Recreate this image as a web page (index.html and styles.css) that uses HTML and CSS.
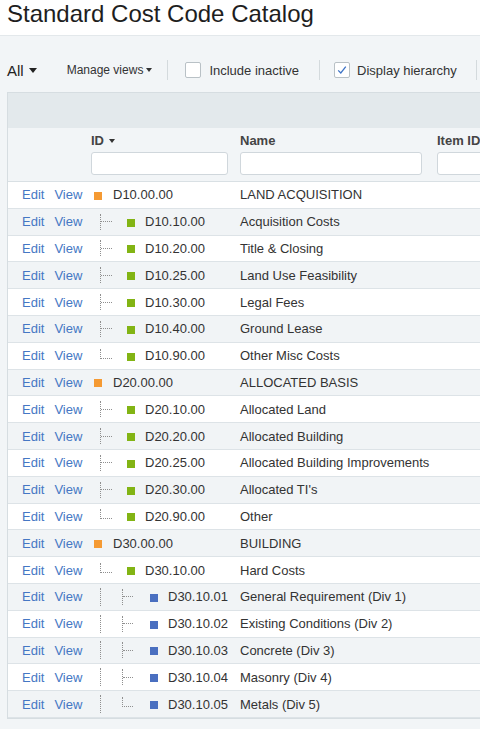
FILE: index.html
```html
<!DOCTYPE html>
<html>
<head>
<meta charset="utf-8">
<link rel="stylesheet" href="styles.css">
</head>
<body>
<div class="title">Standard Cost Code Catalog</div>
<div class="page">
  <div class="toolbar">
    <span class="all">All</span><span class="caret big"></span>
    <span class="manage">Manage views</span><span class="caret small"></span>
    <span class="sep s1"></span>
    <span class="cb cb1"></span><span class="cblabel l1">Include inactive</span>
    <span class="sep s2"></span>
    <span class="cb cb2 checked"><svg width="14" height="14" viewBox="0 0 14 14"><path d="M3.2 7.4 L5.8 10 L10.8 3.6" fill="none" stroke="#3f74c6" stroke-width="1.3"/></svg></span><span class="cblabel l2">Display hierarchy</span>
    <span class="sep s3"></span>
  </div>
  <div class="grid">
    <div class="band"></div>
    <div class="head">
      <div class="c c-act"></div>
      <div class="c c-id"><div class="hlabel">ID <span class="caret tiny"></span></div><div class="inp"></div></div>
      <div class="c c-name"><div class="hlabel">Name</div><div class="inp w-name"></div></div>
      <div class="c c-item"><div class="hlabel">Item ID</div><div class="inp w-item"></div></div>
    </div>
    <div class="rows">
      <div class="row"><div class="c c-act"><a>Edit</a><a>View</a></div><div class="c c-id"><span class="sq o l0"></span><span class="code">D10.00.00</span></div><div class="c c-name">LAND ACQUISITION</div><div class="c c-item"></div></div>
      <div class="row"><div class="c c-act"><a>Edit</a><a>View</a></div><div class="c c-id"><span class="tee"><i></i></span><span class="sq g"></span><span class="code">D10.10.00</span></div><div class="c c-name">Acquisition Costs</div><div class="c c-item"></div></div>
      <div class="row"><div class="c c-act"><a>Edit</a><a>View</a></div><div class="c c-id"><span class="tee"><i></i></span><span class="sq g"></span><span class="code">D10.20.00</span></div><div class="c c-name">Title &amp; Closing</div><div class="c c-item"></div></div>
      <div class="row"><div class="c c-act"><a>Edit</a><a>View</a></div><div class="c c-id"><span class="tee"><i></i></span><span class="sq g"></span><span class="code">D10.25.00</span></div><div class="c c-name">Land Use Feasibility</div><div class="c c-item"></div></div>
      <div class="row"><div class="c c-act"><a>Edit</a><a>View</a></div><div class="c c-id"><span class="tee"><i></i></span><span class="sq g"></span><span class="code">D10.30.00</span></div><div class="c c-name">Legal Fees</div><div class="c c-item"></div></div>
      <div class="row"><div class="c c-act"><a>Edit</a><a>View</a></div><div class="c c-id"><span class="tee"><i></i></span><span class="sq g"></span><span class="code">D10.40.00</span></div><div class="c c-name">Ground Lease</div><div class="c c-item"></div></div>
      <div class="row"><div class="c c-act"><a>Edit</a><a>View</a></div><div class="c c-id"><span class="elbow"></span><span class="sq g"></span><span class="code">D10.90.00</span></div><div class="c c-name">Other Misc Costs</div><div class="c c-item"></div></div>
      <div class="row"><div class="c c-act"><a>Edit</a><a>View</a></div><div class="c c-id"><span class="sq o l0"></span><span class="code">D20.00.00</span></div><div class="c c-name">ALLOCATED BASIS</div><div class="c c-item"></div></div>
      <div class="row"><div class="c c-act"><a>Edit</a><a>View</a></div><div class="c c-id"><span class="tee"><i></i></span><span class="sq g"></span><span class="code">D20.10.00</span></div><div class="c c-name">Allocated Land</div><div class="c c-item"></div></div>
      <div class="row"><div class="c c-act"><a>Edit</a><a>View</a></div><div class="c c-id"><span class="tee"><i></i></span><span class="sq g"></span><span class="code">D20.20.00</span></div><div class="c c-name">Allocated Building</div><div class="c c-item"></div></div>
      <div class="row"><div class="c c-act"><a>Edit</a><a>View</a></div><div class="c c-id"><span class="tee"><i></i></span><span class="sq g"></span><span class="code">D20.25.00</span></div><div class="c c-name">Allocated Building Improvements</div><div class="c c-item"></div></div>
      <div class="row"><div class="c c-act"><a>Edit</a><a>View</a></div><div class="c c-id"><span class="tee"><i></i></span><span class="sq g"></span><span class="code">D20.30.00</span></div><div class="c c-name">Allocated TI's</div><div class="c c-item"></div></div>
      <div class="row"><div class="c c-act"><a>Edit</a><a>View</a></div><div class="c c-id"><span class="elbow"></span><span class="sq g"></span><span class="code">D20.90.00</span></div><div class="c c-name">Other</div><div class="c c-item"></div></div>
      <div class="row"><div class="c c-act"><a>Edit</a><a>View</a></div><div class="c c-id"><span class="sq o l0"></span><span class="code">D30.00.00</span></div><div class="c c-name">BUILDING</div><div class="c c-item"></div></div>
      <div class="row"><div class="c c-act"><a>Edit</a><a>View</a></div><div class="c c-id"><span class="elbow"></span><span class="sq g"></span><span class="code">D30.10.00</span></div><div class="c c-name">Hard Costs</div><div class="c c-item"></div></div>
      <div class="row"><div class="c c-act"><a>Edit</a><a>View</a></div><div class="c c-id"><span class="pipe"></span><span class="tee t2"><i></i></span><span class="sq b"></span><span class="code">D30.10.01</span></div><div class="c c-name">General Requirement (Div 1)</div><div class="c c-item"></div></div>
      <div class="row"><div class="c c-act"><a>Edit</a><a>View</a></div><div class="c c-id"><span class="pipe"></span><span class="tee t2"><i></i></span><span class="sq b"></span><span class="code">D30.10.02</span></div><div class="c c-name">Existing Conditions (Div 2)</div><div class="c c-item"></div></div>
      <div class="row"><div class="c c-act"><a>Edit</a><a>View</a></div><div class="c c-id"><span class="pipe"></span><span class="tee t2"><i></i></span><span class="sq b"></span><span class="code">D30.10.03</span></div><div class="c c-name">Concrete (Div 3)</div><div class="c c-item"></div></div>
      <div class="row"><div class="c c-act"><a>Edit</a><a>View</a></div><div class="c c-id"><span class="pipe"></span><span class="tee t2"><i></i></span><span class="sq b"></span><span class="code">D30.10.04</span></div><div class="c c-name">Masonry (Div 4)</div><div class="c c-item"></div></div>
      <div class="row"><div class="c c-act"><a>Edit</a><a>View</a></div><div class="c c-id"><span class="pipe"></span><span class="elbow e2"></span><span class="sq b"></span><span class="code">D30.10.05</span></div><div class="c c-name">Metals (Div 5)</div><div class="c c-item"></div></div>
    </div>
  </div>
</div>
</body>
</html>
```
FILE: styles.css
```css
* { box-sizing: border-box; }
html, body { margin: 0; padding: 0; }
body {
  width: 480px;
  height: 729px;
  overflow: hidden;
  background: #f2f5f7;
  font-family: "Liberation Sans", Arial, sans-serif;
  color: #333;
}
.title {
  background: #fff;
  height: 36px;
  padding-left: 7px;
  font-size: 24px;
  line-height: 27px;
  color: #1e1e1e;
  border-bottom: 1px solid #e3e8eb;
  white-space: nowrap;
}
.page { background: #f2f5f7; }
.toolbar {
  display: flex;
  align-items: center;
  height: 20px;
  margin-top: 24px;
  margin-bottom: 12px;
  padding-left: 7px;
  white-space: nowrap;
}
.all { font-size: 15px; color: #222; }
.caret {
  display: inline-block;
  width: 0; height: 0;
  border-left: 4.5px solid transparent;
  border-right: 4.5px solid transparent;
  border-top: 5px solid #222;
}
.caret.big { margin-left: 5px; }
.manage { font-size: 12px; color: #333; margin-left: 30px; }
.caret.small {
  margin-left: 3px;
  border-left-width: 3.5px; border-right-width: 3.5px; border-top-width: 4px;
  border-top-color: #333;
}
.sep { width: 1px; height: 20px; background: #d4dadd; }
.s1 { margin-left: 15px; }
.s2 { margin-left: 20px; }
.s3 { margin-left: 19px; }
.cb {
  width: 16px; height: 16px;
  background: #fff;
  border: 1px solid #b9c1c6;
  border-radius: 2px;
  display: flex; align-items: center; justify-content: center;
}
.cb1 { margin-left: 17px; }
.cb2 { margin-left: 14px; }
.cblabel { font-size: 13px; color: #333; }
.l1 { margin-left: 8px; }
.l2 { margin-left: 7px; }

.grid {
  margin-left: 7px;
  width: 473px;
  overflow: hidden;
  border: 1px solid #d6dde1;
  border-right: none;
  background: #fff;
}
.band { height: 35px; background: #e3e9ec; }
.head {
  display: flex;
  background: #f2f5f7;
  height: 54px;
  border-bottom: 1px solid #d9e0e4;
  overflow: hidden;
}
.c { flex: none; padding-left: 6px; overflow: hidden; }
.c-act { width: 77px; padding-left: 14px; }
.c-id { width: 149px; }
.c-name { width: 197px; }
.c-item { width: 49px; }
.head .c { padding-top: 5px; }
.head .c-act { padding-left: 0; }
.hlabel {
  font-size: 13px;
  font-weight: bold;
  color: #444;
  line-height: 16px;
  height: 16px;
  display: flex;
  align-items: center;
  white-space: nowrap;
}
.caret.tiny {
  margin-left: 5px;
  border-left-width: 3px; border-right-width: 3px; border-top-width: 4px;
  border-top-color: #333;
}
.inp {
  margin-top: 3px;
  height: 23px;
  width: 137px;
  background: #fff;
  border: 1px solid #d0d7dc;
  border-radius: 3px;
}
.inp.w-name { width: 182px; }
.inp.w-item { width: 60px; }

.row {
  display: flex;
  align-items: center;
  height: 26.8px;
  border-bottom: 1px solid #dde3e7;
  font-size: 13px;
  color: #333;
  background: #fff;
  white-space: nowrap;
  overflow: hidden;
}
.row:nth-child(even) { background: #f1f4f6; }
.row .c { display: flex; align-items: center; height: 100%; }
.c-act a { color: #4577c4; cursor: pointer; }
.c-act a + a { margin-left: 10px; }

.sq { flex: none; width: 8px; height: 8px; margin-top: 2px; }
.sq.o { background: #f59a33; margin-left: 3px; }
.sq.g { background: #82b414; margin-left: 15px; }
.sq.b { background: #4a6fc0; margin-left: 17px; }
.code { margin-left: 10px; }
.sq.o + .code { margin-left: 11px; }

.tee {
  flex: none;
  display: flex;
  align-items: center;
  width: 12px;
  height: 16px;
  margin-left: 9px;
  border-left: 1px dotted #8f8f8f;
}
.tee i { display: block; width: 11px; border-top: 1px dotted #8f8f8f; }
.tee.t2 { margin-left: 21px; width: 11px; }
.tee.t2 i { width: 10px; }
.elbow {
  flex: none;
  width: 12px;
  height: 10px;
  margin-left: 9px;
  margin-bottom: 4px;
  border-left: 1px dotted #8f8f8f;
  border-bottom: 1px dotted #8f8f8f;
}
.elbow.e2 { margin-left: 21px; width: 11px; }
.pipe {
  flex: none;
  width: 1px;
  height: 18px;
  margin-left: 9px;
  border-left: 1px dotted #8f8f8f;
}
```
